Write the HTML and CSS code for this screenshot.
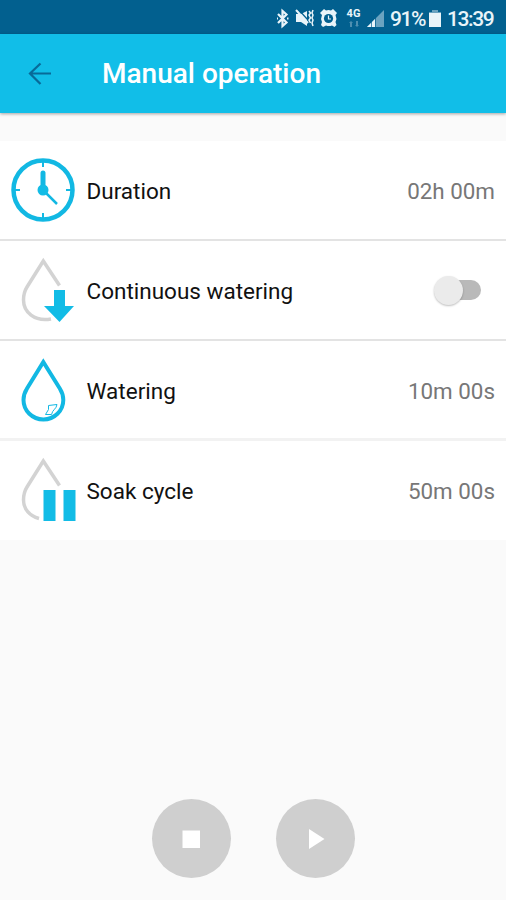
FILE: index.html
```html
<!DOCTYPE html>
<html lang="en">
<head>
  <meta charset="UTF-8">
  <title>Manual operation</title>
  <link rel="stylesheet" href="styles.css">
</head>
<body>
  <div class="status-bar">
    <svg class="bluetooth" width="13" height="19" viewBox="0 0 13 19">
      <path d="M2 5l8.500 8.500L6.500 17V2L10.500 5.500 2 14M1 9.500h1M11 9.500h1.500" />
    </svg>
    <svg class="mute" width="18" height="18" viewBox="0 0 18 18">
      <path class="fill" d="M0 5h5l6-3v15l-6-4H0z" />
      <path class="line" d="M0 1l12 13" />
      <path class="cut" d="M2 0l10 11" />
      <path class="wave" d="M13 2l1.500 2-1.500 2 1.500 3-1.500 2 1.500 3M17 1l-1 3 1 2-1 3 1 2-1 3 1 3" />
    </svg>
    <svg class="alarm" width="17" height="18" viewBox="0 0 17 18">
      <path class="fill" d="M0 4l4-4 2 1.500a8 8 0 0 1 5 0L13 0l4 4-1.500 2a8 8 0 0 1 0 7l1 3-2 2-2.500-1.500a8 8 0 0 1-6 0L3 18l-2-2 1-3a8 8 0 0 1 0-7z" />
      <circle cx="8.500" cy="9.500" r="4.600" />
      <path class="hand" d="M8.500 6.500v3.500h2.500" />
    </svg>
    <span class="network">4G
      <svg width="10" height="6" viewBox="0 0 10 6"><path d="M2 0l2 2H3v4H1V2H0zM8 6L6 4h1V0h2v4h1z" /></svg>
    </span>
    <svg class="signal" width="17" height="17" viewBox="0 0 17 17">
      <path class="weak" d="M0 17L17 0v17z" />
      <path class="strong" d="M0 17l8-8v8z" />
      <path class="gap" d="M4.500 0v17M8.500 0v17" />
    </svg>
    <span class="percent">91%</span>
    <svg class="battery" width="12" height="17" viewBox="0 0 12 17">
      <path class="cap" d="M3 0h6v2h3v2H0V2h3z" />
      <path class="fill" d="M0 3h12v14H0z" />
    </svg>
    <span class="time">13:39</span>
  </div>

  <header class="toolbar">
    <svg class="back" width="24" height="24" viewBox="0 0 24 24">
      <path d="M23 11.500H2M12.500 1.500L2 11.500l10.500 10.500" />
    </svg>
    <h1>Manual operation</h1>
  </header>

  <main class="settings">
    <div class="row">
      <svg class="icon blue" width="64" height="64" viewBox="0 0 64 64">
        <circle cx="32" cy="32" r="29.500" stroke-width="4.500" />
        <path stroke-width="2" d="M32 4v5M32 55v5M4 32h5M55 32h5" />
        <path stroke-width="5" stroke-linecap="round" d="M32 15v17" />
        <path stroke-width="2.500" d="M32 32l14 14" />
        <circle class="solid" cx="32" cy="32" r="5.500" />
      </svg>
      <span class="label">Duration</span>
      <span class="value">02h 00m</span>
    </div>
    <div class="row">
      <svg class="icon grey" width="64" height="64" viewBox="0 0 64 64">
        <path stroke-width="3.500" d="M48.500 27.500L32.300 3 16 29C13.500 33 12.500 37 12.500 42c0 12 11 22 27.500 19" />
        <path class="solid" d="M43 32h11v16h9L48.500 64 33 48h10z" />
      </svg>
      <span class="label">Continuous watering</span>
      <span class="switch"></span>
    </div>
    <div class="row">
      <svg class="icon blue" width="64" height="64" viewBox="0 0 64 64">
        <path stroke-width="4" d="M32.300 4L16 30.500C13.500 34.500 12.500 38 12.500 42a19.900 19.500 0 0 0 39.800 0C52.300 38 51.300 34.500 48.800 30.500z" />
        <path stroke-width="1" d="M46 46.500l-8.500 1v4l-3 5h6c1-5 5-5.500 5.500-10z" />
      </svg>
      <span class="label">Watering</span>
      <span class="value">10m 00s</span>
    </div>
    <div class="row">
      <svg class="icon grey" width="64" height="64" viewBox="0 0 64 64">
        <path stroke-width="3.500" d="M48.500 27.500L32.300 3 16 29C13.500 33 12.500 37 12.500 42c0 9 6 16 15.500 18.500" />
        <path class="solid" d="M32.500 32h12v31h-12zM52.500 32h12v31h-12z" />
      </svg>
      <span class="label">Soak cycle</span>
      <span class="value">50m 00s</span>
    </div>
  </main>

  <footer class="controls">
    <button aria-label="Stop">
      <svg width="30" height="30" viewBox="0 0 30 30"><path d="M6.500 6.500h17.500v17.500H6.500z" /></svg>
    </button>
    <button aria-label="Start">
      <svg width="30" height="30" viewBox="0 0 30 30"><path d="M9 5v20l15.500-10z" /></svg>
    </button>
  </footer>
</body>
</html>
```

FILE: styles.css
```css
* {
  box-sizing: border-box;
}

body {
  margin: 0;
  height: 900px;
  display: flex;
  flex-direction: column;
  overflow: hidden;
  font-family: Roboto, sans-serif;
  background: #fafafa;
}

svg {
  flex: none;
  overflow: visible;
}

.status-bar {
  height: 34px;
  padding: 2px 13px 0 0;
  display: flex;
  align-items: center;
  justify-content: flex-end;
  background: #02608f;
  color: #e9f4f9;
  font-size: 21px;
}

.status-bar .fill {
  fill: #e9f4f9;
}

.bluetooth {
  margin-right: 7px;
  fill: none;
  stroke: #e9f4f9;
  stroke-width: 2.2;
}

.mute {
  margin-right: 6px;
  fill: none;
}

.mute .cut {
  stroke: #02608f;
  stroke-width: 1.2;
}

.mute .line {
  stroke: #e9f4f9;
  stroke-width: 2;
}

.mute .wave {
  stroke: #e9f4f9;
  stroke-width: 1.5;
}

.alarm {
  margin-right: 9px;
  fill: #02608f;
}

.alarm .hand {
  fill: none;
  stroke: #e9f4f9;
  stroke-width: 1.2;
}

.network {
  width: 15px;
  margin-right: 6px;
  display: flex;
  flex-direction: column;
  align-items: center;
  gap: 2px;
  font-size: 11px;
  font-weight: bold;
  line-height: 10px;
}

.network svg {
  fill: #4d8fb1;
}

.signal {
  margin-right: 6px;
}

.signal .weak {
  fill: #6ba3c0;
}

.signal .strong {
  fill: #e9f4f9;
}

.signal .gap {
  stroke: #02608f;
  stroke-width: 0.7;
}

.percent {
  width: 34px;
  margin-right: 5px;
  padding-top: 1px;
  font-weight: 500;
  letter-spacing: -1.4px;
}

.battery {
  margin-right: 6px;
}

.battery .cap {
  fill: #6ba3c0;
}

.time {
  width: 46px;
  padding-top: 1px;
  font-weight: 500;
  letter-spacing: -1.4px;
}

.toolbar {
  height: 79px;
  padding-left: 28px;
  display: flex;
  align-items: center;
  gap: 50px;
  background: #11bee8;
  box-shadow: 0 1px 3px rgba(0, 0, 0, 0.35);
}

.toolbar h1 {
  margin: 0;
  color: white;
  font-size: 28px;
  font-weight: 500;
}

.back {
  fill: none;
  stroke: #086a98;
  stroke-width: 2.2;
}

.settings {
  margin-top: 28px;
  background: white;
}

.row {
  height: 100px;
  padding: 0 11px;
  display: flex;
  align-items: center;
  border-bottom: 2px solid #e3e3e3;
}

.row:nth-child(3) {
  border-bottom: 3px solid #f2f2f2;
}

.row:last-child {
  height: 99px;
  padding-bottom: 1px;
  border-bottom: none;
}

.icon {
  margin-right: 11.5px;
  fill: none;
}

.icon.blue {
  stroke: #12b8e3;
}

.icon.grey {
  stroke: #d3d3d3;
}

.icon .solid {
  fill: #12bce6;
  stroke: none;
}

.label {
  flex: 1;
  padding-top: 2px;
  color: #111;
  font-size: 22.5px;
}

.value {
  padding-top: 2px;
  color: #777;
  font-size: 22.4px;
}

.switch {
  width: 47px;
  height: 29px;
  margin-right: 14px;
  display: flex;
  align-items: center;
}

.switch::before {
  content: "";
  width: 29px;
  height: 29px;
  border-radius: 50%;
  background: #ebebeb;
  box-shadow: 0 1px 2px rgba(0, 0, 0, 0.25);
  z-index: 1;
}

.switch::after {
  content: "";
  width: 32px;
  height: 20px;
  margin-left: -14px;
  border-radius: 10px;
  background: #b9b9b9;
}

.controls {
  margin-top: auto;
  padding-bottom: 22px;
  display: flex;
  justify-content: center;
  gap: 45px;
}

.controls button {
  width: 79px;
  height: 79px;
  padding: 0;
  display: flex;
  align-items: center;
  justify-content: center;
  border: none;
  border-radius: 50%;
  background: #cfcfcf;
}

.controls svg {
  fill: white;
}
```
